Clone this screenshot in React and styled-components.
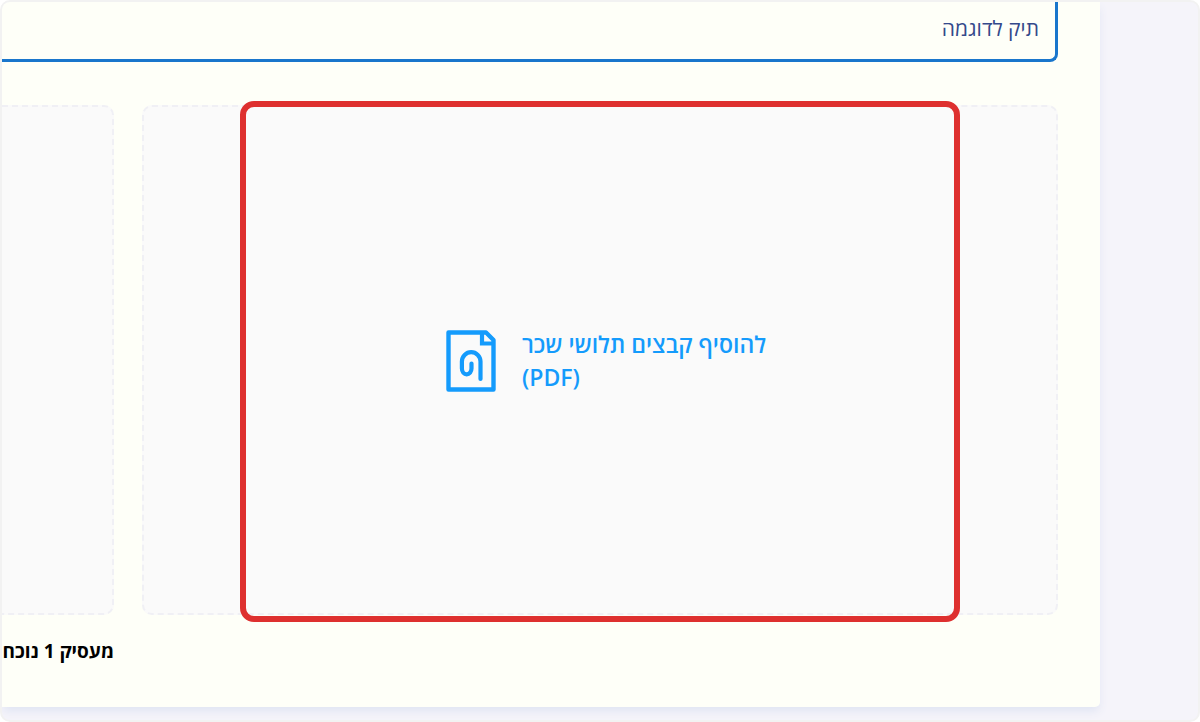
import styled, { createGlobalStyle } from "styled-components";

const GlobalStyle = createGlobalStyle`
  * {
    box-sizing: border-box;
  }

  body {
    margin: 0;
    background: #ffffff;
    font-family: "Open Sans", "Noto Sans", "DejaVu Sans", sans-serif;
  }
`;

const Page = styled.main`
  display: flex;
  min-height: 100vh;
  padding: 0 98px 13px 0;
  border: 2px solid #f2f2f2;
  border-radius: 10px;
  background: #f5f4fa;
  overflow: hidden;
`;

const Card = styled.form`
  flex: 1;
  min-width: 0;
  padding-right: 42px;
  border-radius: 0 0 5px 0;
  background: #fefff8;
  box-shadow: 0 5px 10px -1px #dfe4f3;
`;

const CaseInput = styled.input`
  display: block;
  width: 100%;
  height: 60px;
  padding: 0 16px 6px;
  border: solid #1976cc;
  border-width: 0 3px 3px 0;
  border-radius: 0 0 8px 0;
  outline: none;
  background: transparent;
  color: #34498b;
  font-family: inherit;
  font-size: 21px;
`;

const Employers = styled.div`
  display: grid;
  grid-template-columns: minmax(0, 1fr) 112px;
  column-gap: 28px;
  margin-top: 43px;
`;

const DropZone = styled.section`
  position: relative;
  display: flex;
  align-items: center;
  justify-content: center;
  height: 510px;
  border: 2px dashed #f0f0f5;
  border-left-width: ${(props) => (props.$cut ? "0" : "2px")};
  border-radius: ${(props) => (props.$cut ? "0 10px 10px 0" : "10px")};
  background: #fafafa;
`;

const Highlight = styled.div`
  position: absolute;
  inset: -6px 96px -9px;
  border: 6px solid #de302f;
  border-radius: 14px;
  pointer-events: none;
`;

const UploadButton = styled.button`
  display: flex;
  align-items: center;
  gap: 26px;
  padding: 2px 0 0 12px;
  border: none;
  background: none;
  color: #149bfc;
  font-family: inherit;
  font-size: 23px;
  font-weight: 600;
  line-height: 33px;
  text-align: left;
  cursor: pointer;
`;

const UploadLabel = styled.span`
  white-space: nowrap;
`;

const Line = styled.span`
  display: block;
`;

const EmployerName = styled.h2`
  grid-column: 2;
  margin: 22px 0 0;
  color: #000000;
  font-size: 19px;
  font-weight: 700;
  line-height: 28px;
  white-space: nowrap;
`;

const FileIcon = () => (
  <svg width="50" height="62" viewBox="0 0 50 62" fill="none" stroke="currentColor" aria-hidden="true">
    <path d="M2.5 2.5H40L47.5 10V59.5H2.5Z" strokeWidth="4.4" strokeLinejoin="round" />
    <path d="M36 3V13.5H47" strokeWidth="4.2" />
    <path
      d="M34.5 49V31.5A9.3 9.3 0 0 0 15.9 31.5V38.5A4.8 5.8 0 0 0 25.5 38.5V33.5"
      strokeWidth="4.2"
      strokeLinecap="round"
    />
  </svg>
);

const App = () => {
  return (
    <>
      <GlobalStyle />
      <Page dir="rtl" lang="he">
        <Card>
          <CaseInput type="text" aria-label="שם התיק" defaultValue="תיק לדוגמה" />
          <Employers>
            <DropZone>
              <UploadButton type="button">
                <UploadLabel>
                  <Line>להוסיף קבצים תלושי שכר</Line>
                  <Line>(PDF)</Line>
                </UploadLabel>
                <FileIcon />
              </UploadButton>
              <Highlight />
            </DropZone>
            <DropZone $cut />
            <EmployerName>מעסיק 1 נוכח</EmployerName>
          </Employers>
        </Card>
      </Page>
    </>
  );
};

export default App;
